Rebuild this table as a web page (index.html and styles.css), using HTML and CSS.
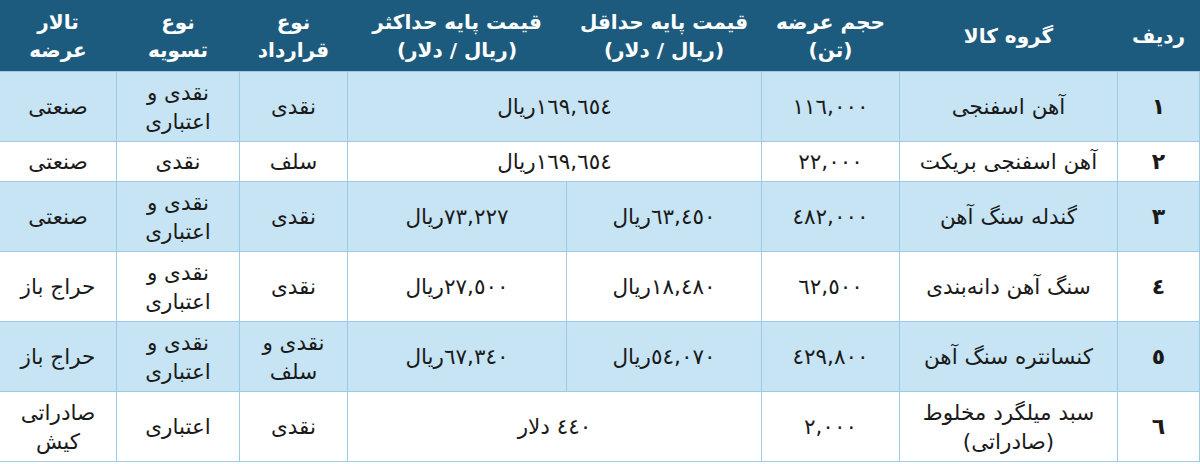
FILE: index.html
```html
<!DOCTYPE html>
<html lang="fa" dir="rtl">
<head>
<meta charset="utf-8">
<link rel="stylesheet" href="styles.css">
</head>
<body>
<table class="grid">
  <colgroup>
    <col class="c-radif"><col class="c-group"><col class="c-vol"><col class="c-min"><col class="c-max"><col class="c-contract"><col class="c-settle"><col class="c-hall">
  </colgroup>
  <thead>
    <tr class="head">
      <th>ردیف</th>
      <th>گروه کالا</th>
      <th>حجم عرضه<br>(تن)</th>
      <th>قیمت پایه حداقل<br>(ریال / دلار)</th>
      <th>قیمت پایه حداکثر<br>(ریال / دلار)</th>
      <th>نوع<br>قرارداد</th>
      <th>نوع<br>تسویه</th>
      <th>تالار<br>عرضه</th>
    </tr>
  </thead>
  <tbody>
    <tr class="tall shade">
      <td class="num">١</td>
      <td>آهن اسفنجی</td>
      <td>١١٦,٠٠٠</td>
      <td colspan="2">١٦٩,٦٥٤ریال</td>
      <td>نقدی</td>
      <td>نقدی و<br>اعتباری</td>
      <td>صنعتی</td>
    </tr>
    <tr class="short">
      <td class="num">٢</td>
      <td>آهن اسفنجی بریکت</td>
      <td>٢٢,٠٠٠</td>
      <td colspan="2">١٦٩,٦٥٤ریال</td>
      <td>سلف</td>
      <td>نقدی</td>
      <td>صنعتی</td>
    </tr>
    <tr class="tall shade">
      <td class="num">٣</td>
      <td>گندله سنگ آهن</td>
      <td>٤٨٢,٠٠٠</td>
      <td>٦٣,٤٥٠ریال</td>
      <td>٧٣,٢٢٧ریال</td>
      <td>نقدی</td>
      <td>نقدی و<br>اعتباری</td>
      <td>صنعتی</td>
    </tr>
    <tr class="tall">
      <td class="num">٤</td>
      <td>سنگ آهن دانه‌بندی</td>
      <td>٦٢,٥٠٠</td>
      <td>١٨,٤٨٠ریال</td>
      <td>٢٧,٥٠٠ریال</td>
      <td>نقدی</td>
      <td>نقدی و<br>اعتباری</td>
      <td>حراج باز</td>
    </tr>
    <tr class="tall shade">
      <td class="num">٥</td>
      <td>کنسانتره سنگ آهن</td>
      <td>٤٢٩,٨٠٠</td>
      <td>٥٤,٠٧٠ریال</td>
      <td>٦٧,٣٤٠ریال</td>
      <td>نقدی و<br>سلف</td>
      <td>نقدی و<br>اعتباری</td>
      <td>حراج باز</td>
    </tr>
    <tr class="tall">
      <td class="num">٦</td>
      <td>سبد میلگرد مخلوط<br>(صادراتی)</td>
      <td>٢,٠٠٠</td>
      <td colspan="2">٤٤٠ دلار</td>
      <td>نقدی</td>
      <td>اعتباری</td>
      <td>صادراتی<br>کیش</td>
    </tr>
  </tbody>
</table>
</body>
</html>
```

FILE: styles.css
```css
html, body {
  margin: 0;
  padding: 0;
  background: #ffffff;
}

.grid {
  width: 1200px;
  table-layout: fixed;
  border-collapse: collapse;
  font-family: "DejaVu Sans", "Noto Sans", sans-serif;
  font-size: 21.5px;
  color: #1a1a1a;
}

.c-radif { width: 82px; }
.c-group { width: 218px; }
.c-vol { width: 138px; }
.c-min { width: 195px; }
.c-max { width: 219px; }
.c-contract { width: 108px; }
.c-settle { width: 123px; }
.c-hall { width: 117px; }

.grid th,
.grid td {
  border: 1px solid #9ccbe3;
  text-align: center;
  vertical-align: middle;
  padding: 0 4px;
  line-height: 29px;
}

.head {
  height: 71px;
  background: #1d5b7e;
}

.grid th {
  color: #ffffff;
  font-weight: bold;
  font-size: 20px;
  border-color: #1d5b7e;
  border-bottom-color: #9ccbe3;
  line-height: 28px;
}

.grid .num {
  font-weight: bold;
  font-size: 22px;
}

.tall { height: 70px; }
.short { height: 40px; }

.shade { background: #c6e4f4; }
```
